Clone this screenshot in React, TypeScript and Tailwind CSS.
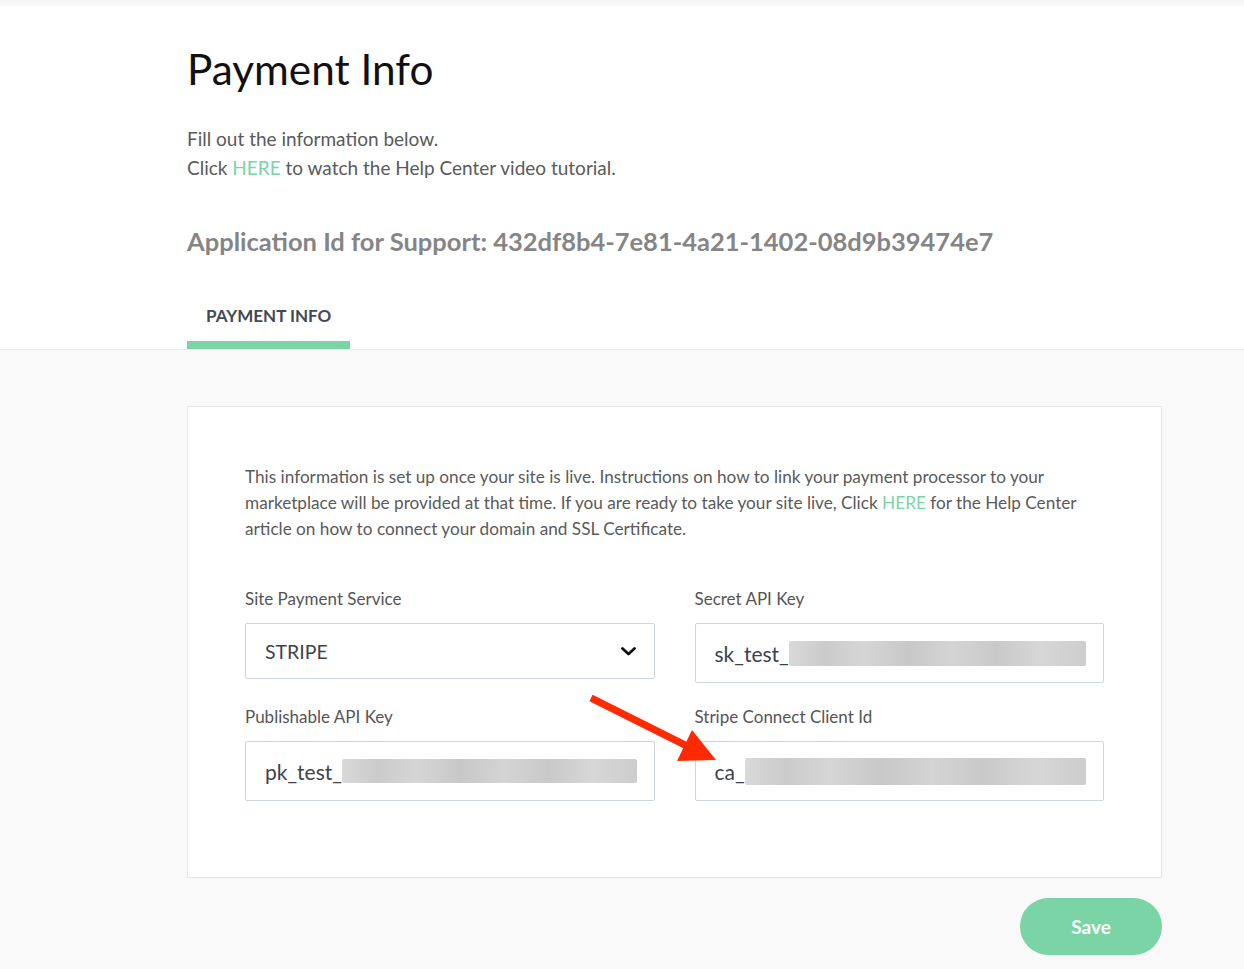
import React from "react";

const blur =
  "bg-[linear-gradient(90deg,#d9d9d9_0%,#cbcbcb_12%,#d6d6d6_25%,#c8c8c8_40%,#d4d4d4_55%,#c9c9c9_70%,#d7d7d7_85%,#cdcdcd_100%)]";

function Field({
  label,
  prefix,
  height,
  blurClass,
}: {
  label: string;
  prefix: string;
  height: string;
  blurClass: string;
}) {
  return (
    <div className="flex flex-col">
      <label className="text-[17px] leading-[24px] text-[#555]">{label}</label>
      <div
        className={`mt-[12px] ${height} border border-[#cdd5de] rounded-[2px] bg-white flex items-center pl-[19px] pr-[17px]`}
      >
        <span className="text-[21px] text-[#3d434d] leading-none">{prefix}</span>
        <div className={`${blurClass} ${blur} flex-1 rounded-[2px]`} />
      </div>
    </div>
  );
}

export default function App() {
  return (
    <div
      className="relative min-h-screen bg-[#f9f9f9]"
      style={{ fontFamily: "Lato, 'Open Sans', sans-serif" }}
    >
      <div className="h-[6px] bg-[#f7f7f7]" />
      <header className="bg-white border-b border-[#ececec] pl-[187px]">
        <h1 className="pt-[42px] text-[42.3px] leading-none text-[#111] font-normal">
          Payment Info
        </h1>
        <div className="mt-[34px] text-[19px] leading-[29px] text-[#5a5a5a]">
          <p>Fill out the information below.</p>
          <p>
            Click <span className="text-[#7ad4a5]">HERE</span> to watch the Help Center video
            tutorial.
          </p>
        </div>
        <h2 className="mt-[44px] text-[25.5px] leading-[31px] font-bold text-[#858585]">
          Application Id for Support: 432df8b4-7e81-4a21-1402-08d9b39474e7
        </h2>
        <div className="mt-[47px] inline-flex flex-col">
          <span className="px-[19px] text-[17px] leading-[24px] font-bold text-[#434955]">
            PAYMENT INFO
          </span>
          <div className="mt-[13px] h-[8px] bg-[#7ad4a5]" />
        </div>
      </header>

      <main className="pl-[187px] pt-[56px] pb-[14px]">
        <div className="w-[975px] bg-white border border-[#e6e6e6] px-[57px] pt-[57px] pb-[76px]">
          <p className="text-[17.2px] leading-[26px] text-[#5a5a5a]">
            This information is set up once your site is live. Instructions on how to link your
            payment processor to your marketplace will be provided at that time. If you are ready to
            take your site live, Click <span className="text-[#7ad4a5]">HERE</span> for the Help
            Center article on how to connect your domain and SSL Certificate.
          </p>

          <div className="mt-[45px] grid grid-cols-2 gap-x-[40px] gap-y-[22px] items-start">
            <div className="flex flex-col">
              <label className="text-[17px] leading-[24px] text-[#555]">
                Site Payment Service
              </label>
              <div className="mt-[12px] h-[56px] border border-[#cdd5de] rounded-[2px] bg-white flex items-center justify-between pl-[19px] pr-[18px]">
                <span className="text-[19.5px] text-[#3d434d] leading-none">STRIPE</span>
                <svg width="15" height="9" viewBox="0 0 15 9">
                  <path
                    d="M1.5 1.5 L7.5 7 L13.5 1.5"
                    fill="none"
                    stroke="#111"
                    strokeWidth="2.8"
                    strokeLinecap="round"
                    strokeLinejoin="round"
                  />
                </svg>
              </div>
            </div>
            <Field label="Secret API Key" prefix="sk_test_" height="h-[60px]" blurClass="h-[25px]" />
            <Field
              label="Publishable API Key"
              prefix="pk_test_"
              height="h-[60px]"
              blurClass="h-[24px]"
            />
            <Field
              label="Stripe Connect Client Id"
              prefix="ca_"
              height="h-[60px]"
              blurClass="h-[27px]"
            />
          </div>
        </div>

        <div className="w-[975px] flex justify-end mt-[20px]">
          <button className="w-[142px] h-[57px] rounded-full bg-[#7ad4a5] text-white text-[19px] font-bold">
            Save
          </button>
        </div>
      </main>

      <svg
        className="absolute top-0 left-0 pointer-events-none"
        width="1244"
        height="969"
        viewBox="0 0 1244 969"
      >
        <line x1="591" y1="698" x2="688" y2="746.5" stroke="#ff2a00" strokeWidth="7" />
        <polygon points="692,730 677,761 716,760" fill="#ff2a00" />
      </svg>
    </div>
  );
}
